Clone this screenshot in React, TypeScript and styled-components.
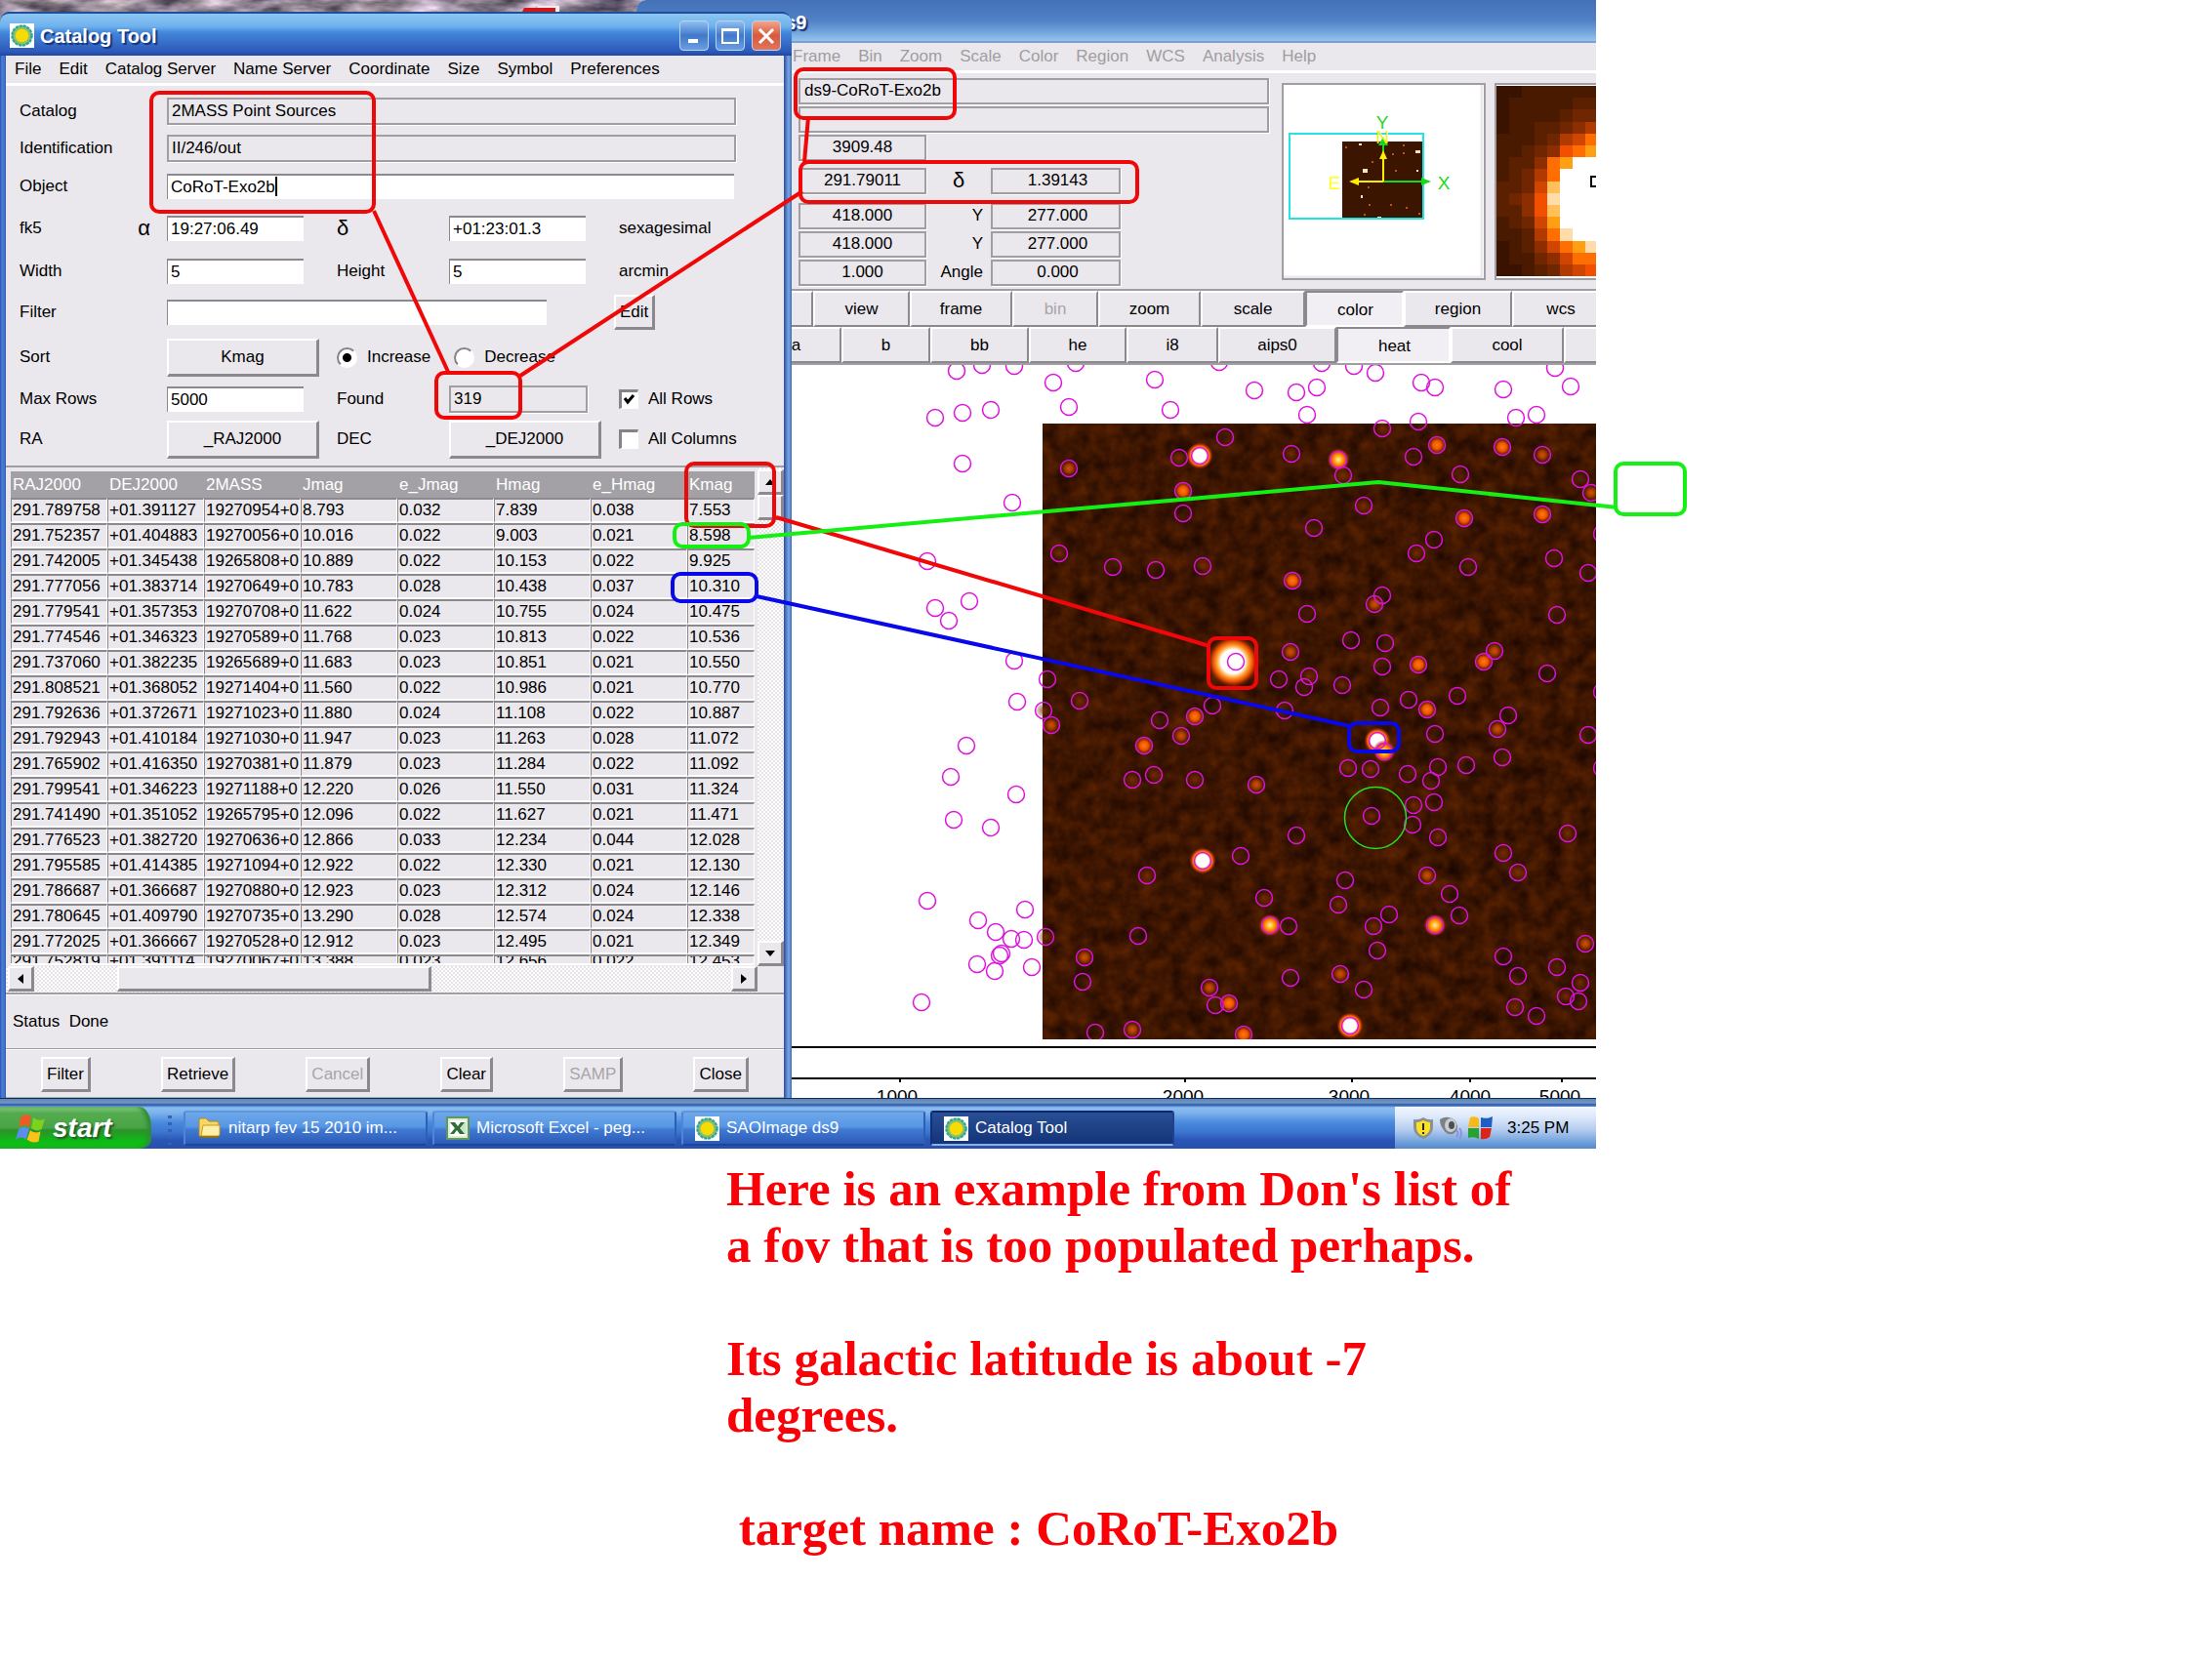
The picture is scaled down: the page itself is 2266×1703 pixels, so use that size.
import React from "react";
import styled, { createGlobalStyle, css } from "styled-components";

const GlobalStyle = createGlobalStyle`
  *, *::before, *::after { box-sizing: border-box; }
  body {
    margin: 0;
    background: #fff;
    color: #000;
    font-family: "Liberation Sans", Arial, sans-serif;
    font-size: 17px;
    line-height: 20px;
  }
  button, input { font: inherit; color: inherit; margin: 0; }
`;

const face = "#ebe8ed";
const edge = "#a09ea3";
const shade = "#8b898e";

const Page = styled.main`
  display: grid;
  grid-template-columns: minmax(0, 1635fr) minmax(0, 631fr);
`;

const Desktop = styled.section`
  position: relative;
  grid-column: 1;
`;

const Wallpaper = styled.svg`
  position: absolute;
  inset: 0;
  width: 100%;
  height: 60px;
`;

/* ---------- Catalog window ---------- */

const CatalogWindow = styled.section`
  position: relative;
  z-index: 2;
  width: 811px;
  margin-top: 12px;
  padding: 0 8px 0 6px;
  background: linear-gradient(90deg, #2a4fa8 0, #4a7fd8 2px, #3f6fcb 5px, transparent 6px),
    linear-gradient(270deg, #3b6ab8 0, #78a9e4 3px, #5a86cc 5px, #2f4aa0 8px);
  border-radius: 10px 10px 0 0;
`;

const DesktopStart = styled.div`
  display: flow-root;
`;

const TitleBar = styled.header`
  display: flex;
  align-items: center;
  gap: 6px;
  height: 45px;
  margin: 0 -8px 0 -6px;
  padding: 2px 11px 0 10px;
  border-top: 2px solid #1f4f9c;
  border-radius: 10px 10px 0 0;
  background: linear-gradient(#8cc6f2 0, #6fb2ec 30%, #4387dc 45%, #3a72cc 65%, #2c5abb 90%, #2244a0 100%);
`;

const TitleText = styled.h1`
  flex: 1;
  margin: 0;
  font-size: 20px;
  line-height: 24px;
  font-weight: 700;
  color: #fff;
  text-shadow: 2px 2px 1px #16337c;
`;

const WindowButtons = styled.div`
  display: flex;
  gap: 7px;
`;

const WindowButton = styled.button<{ $close?: boolean }>`
  display: grid;
  place-items: center;
  width: 30px;
  height: 31px;
  padding: 0;
  border: 1px solid #b9d3f3;
  border-radius: 4px;
  background: ${(p) =>
    p.$close
      ? "linear-gradient(#f0a58c, #d9593a 50%, #e0765c)"
      : "linear-gradient(#8fc0ef, #4278cc 50%, #6b9ee0)"};
`;

const MenuBar = styled.nav<{ $muted?: boolean }>`
  display: flex;
  gap: 18px;
  height: 31px;
  padding: 4px 0 0 ${(p) => (p.$muted ? 160 : 9)}px;
  border-bottom: 3px solid #fff;
  background: ${face};
  color: ${(p) => (p.$muted ? "#9f9da1" : "#000")};
`;

const MenuItem = styled.button`
  padding: 0;
  height: 20px;
  border: 0;
  background: none;
`;

const Form = styled.form`
  display: grid;
  grid-template-columns: 151px 174px 115px 174px 1fr;
  grid-template-rows: 39px 38px 40px 46px 42px 42px 50px 36px 46px;
  align-items: center;
  padding: 6px 0 4px 14px;
  background: ${face};
  border-bottom: 2px solid ${edge};
`;

const FieldLabel = styled.label`
  display: block;
`;

const LabelPair = styled.div`
  display: flex;
  justify-content: space-between;
  padding-right: 17px;
`;

const Greek = styled.label`
  font-size: 22px;
`;

const FieldWrap = styled.div<{ $span: number }>`
  position: relative;
  display: flex;
  grid-column: span ${(p) => p.$span};
`;

const Entry = styled.input<{ $w: number }>`
  width: ${(p) => p.$w}px;
  height: 26px;
  padding: 0 3px;
  border: 0;
  border-top: 2px solid ${shade};
  border-left: 1px solid ${shade};
  border-radius: 0;
  outline: 0;
  background: #fff;
  &:read-only {
    height: 28px;
    border: 2px solid ${edge};
    background: ${face};
    box-shadow: 1px 1px 0 #fff;
  }
`;

const Caret = styled.span`
  position: absolute;
  left: 111px;
  top: 3px;
  width: 2px;
  height: 20px;
  background: #000;
`;

const raised = css`
  border: solid;
  border-width: 2px 3px 3px 2px;
  border-color: #fff ${shade} ${shade} #fff;
  border-radius: 0;
  background: ${face};
`;

const PushButton = styled.button<{ $w?: number; $h?: number }>`
  ${raised}
  width: ${(p) => (p.$w ? `${p.$w}px` : "auto")};
  height: ${(p) => p.$h ?? 36}px;
  padding: 0 4px;
  &:disabled { color: #a7a5a9; }
`;

const EditButton = styled(PushButton)`
  justify-self: start;
  padding: 0 4px;
  margin-left: -5px;
`;

const RadioRow = styled.div`
  grid-column: span 3;
  display: flex;
  gap: 24px;
`;

const Choice = styled.label`
  display: flex;
  align-items: center;
  gap: 10px;
`;

const Radio = styled.input`
  appearance: none;
  width: 21px;
  height: 21px;
  border: 2px solid;
  border-color: #858388 #fff #fff #858388;
  border-radius: 50%;
  background: #fff;
  &:checked { background: radial-gradient(circle, #000 0 4px, #fff 5px); }
`;

const CheckWrap = styled.span`
  display: grid;
  > * { grid-area: 1 / 1; place-self: center; }
  svg { pointer-events: none; }
`;

const Check = styled.input`
  appearance: none;
  width: 20px;
  height: 20px;
  border: 3px solid;
  border-width: 3px 1px 1px 3px;
  border-color: #858388 #fff #fff #858388;
  background: #fff;
`;

const Results = styled.div`
  display: grid;
  grid-template-columns: minmax(0, 1fr) 27px;
  grid-template-rows: 511px 27px;
  border-bottom: 2px solid ${edge};
  background: ${face};
`;

const TableClip = styled.div`
  height: 504px;
  margin: 4px 3px 0 5px;
  overflow: hidden;
  box-shadow: 0 2px 0 #fff;
`;

const Table = styled.table`
  width: 100%;
  table-layout: fixed;
  border-collapse: separate;
  border-spacing: 0;
  col:last-child { width: 69px; }
`;

const HeadCell = styled.th`
  height: 27px;
  padding: 0 2px;
  background: #a3a1a6;
  color: #fff;
  font-weight: 400;
  text-align: left;
`;

const Cell = styled.td<{ $cut: boolean }>`
  height: 26px;
  padding: 0 0 0 1px;
  border: solid;
  border-width: 2px 1px 2px 1px;
  border-color: ${shade} #fff #fff ${shade};
  line-height: ${(p) => (p.$cut ? 10 : 22)}px;
  vertical-align: top;
  white-space: nowrap;
  overflow: hidden;
`;

const trough = css`
  background: repeating-conic-gradient(#fff 0 25%, #e6e3e8 0 50%) 0 0 / 4px 4px;
`;

const VScroll = styled.div`
  ${trough}
  display: flex;
  flex-direction: column;
  padding-top: 2px;
`;

const HScroll = styled.div`
  ${trough}
  display: flex;
  padding-left: 2px;
`;

const ScrollButton = styled.button`
  ${raised}
  display: grid;
  place-items: center;
  flex: none;
  width: 27px;
  height: 26px;
  padding: 0;
`;

const Thumb = styled.div<{ $w?: number; $h?: number }>`
  ${raised}
  width: ${(p) => (p.$w ? `${p.$w}px` : "auto")};
  height: ${(p) => p.$h ?? 26}px;
`;

const Spacer = styled.div<{ $size?: number }>`
  flex: ${(p) => (p.$size ? `0 0 ${p.$size}px` : "1")};
`;

const Status = styled.p`
  margin: 0;
  padding: 17px 7px;
  border-top: 1px solid #fff;
  border-bottom: 1px solid ${edge};
  background: ${face};
`;

const Actions = styled.footer`
  display: flex;
  justify-content: space-around;
  padding: 7px 0 5px;
  border-top: 1px solid #fff;
  border-bottom: 1px solid #a5b0ae;
  background: ${face};
`;

/* ---------- ds9 window ---------- */

const Ds9Window = styled.section`
  position: absolute;
  z-index: 1;
  top: 0;
  right: 0;
  bottom: 52px;
  left: 652px;
  overflow: hidden;
  border-radius: 10px 0 0 0;
  background: ${face};
`;

const Ds9Title = styled.header`
  height: 44px;
  padding: 11px 0 0 140px;
  border-bottom: 2px solid #7e9dd0;
  background: linear-gradient(#4471b8, #5080c6 50%, #6ea0da 75%, #92c4ec);
`;

const Ds9Info = styled.div`
  display: flex;
  padding-left: 166px;
  height: 223px;
  border-bottom: 2px solid ${edge};
`;

const Readouts = styled.div`
  flex: none;
  display: grid;
  grid-template-columns: 131px 66px 133px 152px;
  grid-template-rows: 29px 29px 34px 36px 29px 29px 29px;
  padding-top: 5px;
`;

const Readout = styled.output<{ $long?: boolean }>`
  height: 27px;
  padding: 1px 4px;
  border: 2px solid ${edge};
  box-shadow: 1px 1px 0 #fff;
  text-align: ${(p) => (p.$long ? "left" : "center")};
  ${(p) => p.$long && "grid-column: 1 / -1;"}
`;

const ReadoutLabel = styled.span<{ $end?: boolean }>`
  grid-column: 2;
  padding: ${(p) => (p.$end ? "3px 8px 0 0" : "3px 0 0")};
  text-align: ${(p) => (p.$end ? "right" : "center")};
  font-size: ${(p) => (p.$end ? 17 : 22)}px;
`;

const SecondReadout = styled(Readout)`
  grid-column: 3;
  padding-left: 8px;
`;

const ImageBox = styled.div<{ $w: number }>`
  flex: none;
  width: ${(p) => p.$w}px;
  height: 202px;
  margin: 10px 0 0 ${(p) => (p.$w > 150 ? 13 : 9)}px;
  border: 2px solid ${edge};
  background: #fff;
  svg { display: block; }
`;

const ButtonRow = styled.div<{ $inset: number }>`
  display: flex;
  height: 37px;
  padding-left: ${(p) => p.$inset}px;
`;

const Tab = styled.button<{ $w: number; $on?: boolean }>`
  flex: none;
  width: ${(p) => p.$w}px;
  padding: ${(p) => (p.$on ? "2px 0 0 2px" : "0")};
  border: solid;
  border-width: 2px;
  border-color: ${(p) => (p.$on ? `${shade} #fff #fff ${shade}` : `#fff ${shade} ${shade} #fff`)};
  background: ${(p) => (p.$on ? "#f1eff3" : face)};
  &:disabled { color: #a7a5a9; }
`;

const SkyImage = styled.svg`
  display: block;
  width: 100%;
  height: 753px;
  border-top: 2px solid ${edge};
  background: #fff;
`;

/* ---------- Taskbar ---------- */

const Taskbar = styled.footer`
  position: relative;
  z-index: 2;
  display: flex;
  height: 52px;
  padding-top: 8px;
  border-top: 1px solid #0f2f5c;
  background: linear-gradient(#5b84b6 0, #7497c4 4px, #2a57ab 6px, #8abdf0 9px, #7db3ec 14px, #4a8ade 24px, #3b76d0 34px, #2b55b4 42px, #2750ae 51px);
`;

const StartButton = styled.button`
  flex: none;
  display: flex;
  align-items: center;
  gap: 6px;
  width: 155px;
  padding: 0 0 0 16px;
  border: 0;
  border-radius: 0 12px 12px 0 / 0 22px 10px 0;
  background: linear-gradient(#8fcf8b 0, #55ac50 15%, #48a444 50%, #2d912c 56%, #10b816 80%, #0cc414 100%);
  box-shadow: inset -4px 0 4px #2f8a3a;
  color: #fff;
  font-size: 28px;
  line-height: 32px;
  font-weight: 700;
  font-style: italic;
  text-shadow: 2px 2px 2px #24552a;
`;

const Grip = styled.div`
  flex: none;
  width: 9px;
  margin: 7px 9px 4px 15px;
  background: radial-gradient(circle, #3263b4 0 2px, transparent 2px) 0 0 / 8px 7px;
`;

const Tasks = styled.div`
  flex: 1;
  display: flex;
  gap: 5px;
  padding: 4px 0 3px;
  min-width: 0;
`;

const Task = styled.button<{ $on?: boolean }>`
  flex: none;
  display: flex;
  align-items: center;
  gap: 7px;
  width: 250px;
  padding: 0 0 0 12px;
  border: 2px solid;
  border-color: ${(p) => (p.$on ? "#0d2566 #23408c #8fb0e6 #12307a" : "#5f97dc #2f5fb4 #1c459c #4d86d6")};
  border-radius: 3px;
  background: ${(p) =>
    p.$on
      ? "linear-gradient(#284f95, #1f4185 50%, #12337a)"
      : "linear-gradient(#6ea8ea, #5796e4 45%, #4079d2 55%, #2b5bb8)"};
  color: #fff;
  white-space: nowrap;
`;

const Tray = styled.div`
  flex: none;
  display: flex;
  align-items: center;
  gap: 5px;
  width: 206px;
  padding-left: 18px;
  background: linear-gradient(#f2f7fe 0, #dce8fa 25%, #b4ccef 55%, #6f9fdb 85%, #5488cc 100%);
`;

const Clock = styled.time`
  margin-left: 10px;
`;

const Markup = styled.svg`
  position: absolute;
  z-index: 3;
  top: 0;
  left: 0;
  width: 1635px;
  height: 1177px;
  overflow: visible;
  pointer-events: none;
`;

const Note = styled.p`
  grid-column: 1 / -1;
  margin: 12px 0 0 744px;
  color: #fb0007;
  font: 700 51px/58px "Liberation Serif", "Times New Roman", serif;
  white-space: pre;
`;

/* ---------- Data ---------- */

const columns = ["RAJ2000", "DEJ2000", "2MASS", "Jmag", "e_Jmag", "Hmag", "e_Hmag", "Kmag"];

const rows = `291.789758 +01.391127 19270954+0 8.793 0.032 7.839 0.038 7.553
291.752357 +01.404883 19270056+0 10.016 0.022 9.003 0.021 8.598
291.742005 +01.345438 19265808+0 10.889 0.022 10.153 0.022 9.925
291.777056 +01.383714 19270649+0 10.783 0.028 10.438 0.037 10.310
291.779541 +01.357353 19270708+0 11.622 0.024 10.755 0.024 10.475
291.774546 +01.346323 19270589+0 11.768 0.023 10.813 0.022 10.536
291.737060 +01.382235 19265689+0 11.683 0.023 10.851 0.021 10.550
291.808521 +01.368052 19271404+0 11.560 0.022 10.986 0.021 10.770
291.792636 +01.372671 19271023+0 11.880 0.024 11.108 0.022 10.887
291.792943 +01.410184 19271030+0 11.947 0.023 11.263 0.028 11.072
291.765902 +01.416350 19270381+0 11.879 0.023 11.284 0.022 11.092
291.799541 +01.346223 19271188+0 12.220 0.026 11.550 0.031 11.324
291.741490 +01.351052 19265795+0 12.096 0.022 11.627 0.021 11.471
291.776523 +01.382720 19270636+0 12.866 0.033 12.234 0.044 12.028
291.795585 +01.414385 19271094+0 12.922 0.022 12.330 0.021 12.130
291.786687 +01.366687 19270880+0 12.923 0.023 12.312 0.024 12.146
291.780645 +01.409790 19270735+0 13.290 0.028 12.574 0.024 12.338
291.772025 +01.366667 19270528+0 12.912 0.023 12.495 0.021 12.349
291.752819 +01.391114 19270067+0 13.388 0.023 12.656 0.022 12.453`
  .split("\n")
  .map((line) => line.split(" "));

// Catalogue sources: x, y and brightness class (0 none, 1 dim, 2 medium, 3 bright, 4 hot, 5 saturated)
const sources: number[][] = [
  [980,380,0],[1006,374,0],[1039,375,0],[1102,372,0],[1079,392,0],[1183,389,0],[1095,417,0],[1199,420,0],[958,428,0],[986,423,0],
  [1015,420,0],[986,475,0],[1037,515,0],[1095,480,2],[1208,469,1],[1229,467,5],[1212,503,3],[1212,526,0],[1085,567,1],[1140,581,0],
  [1184,584,0],[1232,580,1],[950,575,0],[993,616,0],[958,623,0],[972,636,0],[1039,677,0],[1073,696,0],[1042,719,0],[1069,728,1],
  [1077,743,2],[1106,718,1],[1188,738,0],[1224,734,3],[1242,723,0],[1210,754,2],[1172,764,3],[990,764,0],
  [1249,371,0],[1285,400,0],[1328,402,0],[1349,397,0],[1354,372,0],[1339,425,0],[1387,375,0],[1409,382,0],[1456,392,0],[1470,397,0],
  [1540,399,0],[1593,377,0],[1609,396,0],[1553,428,0],[1574,425,0],[1453,432,0],[1416,439,1],[1255,448,0],[1323,465,1],[1371,471,4],
  [1376,487,1],[1448,468,0],[1472,456,3],[1539,458,3],[1580,466,2],[1496,486,0],[1619,491,0],[1630,505,2],[1397,518,1],[1346,541,0],
  [1500,531,3],[1580,527,3],[1469,553,0],[1451,567,1],[1504,581,0],[1592,572,0],[1627,587,0],[1641,547,0],[1324,595,3],[1416,610,0],
  [1408,619,2],[1339,629,0],[1384,656,0],[1419,659,0],[1595,630,0],[1322,668,2],[1416,683,0],[1453,681,3],[1531,667,2],[1520,678,3],
  [1585,690,0],[1310,696,0],[1341,693,1],[1336,704,0],[1375,702,1],[1641,709,0],[1493,713,0],[1316,728,0],[1414,725,0],[1443,717,0],
  [1462,727,3],[1545,733,0],[1534,747,2],[1470,752,0],[1627,753,0],[1266,678,6],[1411,759,5],[1418,770,4],
  [974,796,0],[1041,814,0],[977,840,0],[1015,848,0],[950,923,0],[1002,943,0],[1050,932,0],[1020,955,0],[1036,962,0],[1049,963,0],
  [1024,979,0],[1026,977,0],[1001,988,0],[1019,995,0],[1057,991,0],[944,1027,0],[1071,960,1],[1160,799,1],[1182,794,1],[1224,799,1],
  [1232,882,5],[1175,897,1],[1166,959,0],[1111,981,2],[1109,1006,0],[1239,1012,2],[1245,1030,0],[1122,1058,0],[1160,1055,2],
  [1381,787,1],[1404,788,1],[1442,793,0],[1473,786,0],[1466,800,0],[1502,784,0],[1539,776,0],[1287,804,2],[1405,836,1],[1448,825,1],
  [1447,845,0],[1469,822,0],[1473,858,1],[1328,856,0],[1271,877,0],[1606,854,1],[1540,874,1],[1555,894,1],[1462,897,2],[1378,902,0],
  [1371,927,1],[1485,916,0],[1495,938,0],[1295,920,1],[1301,948,4],[1320,949,0],[1470,948,4],[1423,937,0],[1407,949,1],[1411,974,0],
  [1540,980,0],[1555,1000,0],[1624,967,2],[1595,991,0],[1619,1007,1],[1604,1021,1],[1617,1026,0],[1322,1002,0],[1373,998,2],
  [1397,1014,0],[1259,1028,3],[1274,1060,3],[1383,1051,5],[1552,1032,1],[1574,1041,0],[1641,787,0],
];

const glow = ["", "dim", "mid", "hot", "gold", "white"];
const glowRadius = [0, 9, 9, 10, 12, 14];

const magnifierColors = ["#3a1200", "#4a1a00", "#5a2000", "#702600", "#8c2e00", "#b03a00", "#d04600", "#f25000", "#ff6e00", "#ff9f12", "#ffc05a", "#ffdcaa", "#ffffff"];
const magnifierRows = [
  "00111111", "01111122", "01111233", "01122345", "11123568", "11234789", "122489cc", "12358ccc",
  "2236accc", "2347bccc", "2247accc", "12369ccc", "11258bcc", "0124689b", "01134688", "00123567",
];

/* ---------- Drawings ---------- */

const SunIcon = () => (
  <svg width="25" height="25" viewBox="0 0 25 25" aria-hidden="true">
    <rect width="25" height="25" fill="#fff" />
    <circle cx="12.5" cy="12.5" r="10.5" fill="#8fc069" />
    <circle cx="12.5" cy="12.5" r="10" fill="none" stroke="#2fa7a0" strokeWidth="2.5" strokeDasharray="3 1" />
    <circle cx="12.5" cy="12.5" r="6.8" fill="#f7dc04" />
  </svg>
);

const FolderIcon = () => (
  <svg width="25" height="24" viewBox="0 0 25 24" aria-hidden="true">
    <path d="M2 4q0-2 2-2h5l3 3h8q2 0 2 2v13H2z" fill="#f6d768" stroke="#b98a17" />
    <path d="M6 9h17v9q0 2-2 2H4z" fill="#fff0a8" stroke="#c79a24" />
    <path d="M3 20h19l-1 2H4z" fill="#9a7010" />
  </svg>
);

const ExcelIcon = () => (
  <svg width="24" height="24" viewBox="0 0 24 24" aria-hidden="true">
    <rect x="1" y="1" width="22" height="22" fill="#dcebd6" stroke="#5d9a5c" strokeWidth="2" />
    <rect x="4" y="4" width="16" height="16" fill="#fff" />
    <rect x="14" y="6" width="6" height="12" fill="#cfe3ca" />
    <path d="M4 6h5l3 4 3-4h4l-5 6 5 6h-5l-3-4-3 4H4l5-6z" fill="#2d6f34" />
  </svg>
);

const FlagIcon = () => (
  <svg width="32" height="30" viewBox="0 0 30 28" aria-hidden="true">
    <path d="M5 3q5-4 10 0l-2 10q-5-4-10 0z" fill="#ee5a24" />
    <path d="M17 4q5 4 11 1l-3 10q-5 3-10-1z" fill="#7dd21e" />
    <path d="M3 15q5-4 10 0l-3 10q-4-4-10 0z" fill="#5b8def" />
    <path d="M14 16q5 4 10 1l-2 10q-6 2-11-2z" fill="#fbc21a" />
  </svg>
);

const Arrow = ({ d }: { d: string }) => (
  <svg width="12" height="12" viewBox="0 0 12 12" aria-hidden="true"><path d={d} fill="#000" /></svg>
);

const Sky = () => (
  <SkyImage viewBox="652 374 983 751" preserveAspectRatio="xMinYMin slice" role="img" aria-label="Star field">
    <defs>
      <filter id="grain" x="0" y="0" width="1" height="1" colorInterpolationFilters="sRGB">
        <feTurbulence type="fractalNoise" baseFrequency="0.06" numOctaves="3" seed="8" />
        <feColorMatrix values="0.32 0 0 0 0.08  0.14 0 0 0 0.015  0 0 0 0 0.004  0 0 0 0 1" />
      </filter>
      <radialGradient id="dim"><stop offset="0" stopColor="#8a3000" stopOpacity=".8" /><stop offset="1" stopColor="#6b2400" stopOpacity="0" /></radialGradient>
      <radialGradient id="mid"><stop offset="0" stopColor="#d25000" /><stop offset=".4" stopColor="#a83c00" /><stop offset="1" stopColor="#6b2400" stopOpacity="0" /></radialGradient>
      <radialGradient id="hot"><stop offset="0" stopColor="#ff7c0a" /><stop offset=".45" stopColor="#ee5200" /><stop offset="1" stopColor="#7a2400" stopOpacity="0" /></radialGradient>
      <radialGradient id="gold"><stop offset="0" stopColor="#fff0a0" /><stop offset=".35" stopColor="#ffa412" /><stop offset=".65" stopColor="#e84e00" /><stop offset="1" stopColor="#7a2400" stopOpacity="0" /></radialGradient>
      <radialGradient id="white"><stop offset=".45" stopColor="#fff" /><stop offset=".62" stopColor="#ff9d2a" /><stop offset=".78" stopColor="#e04400" /><stop offset="1" stopColor="#5a1c00" stopOpacity="0" /></radialGradient>
    </defs>
    <rect x="1068" y="434" width="567" height="631" fill="#3c1500" filter="url(#grain)" />
    <circle cx="1263" cy="678" r="27" fill="url(#white)" />
    {sources.filter((s) => s[2] > 0 && s[2] < 6).map(([x, y, b]) => (
      <circle key={`${x}-${y}`} cx={x} cy={y} r={glowRadius[b]} fill={`url(#${glow[b]})`} />
    ))}
    <g fill="none" stroke="#dd12dd" strokeWidth="1.5">
      {sources.map(([x, y]) => <circle key={`${x}-${y}`} cx={x} cy={y} r="8.5" />)}
    </g>
    <circle cx="1409" cy="838" r="31.5" fill="none" stroke="#22e022" strokeWidth="1.5" />
    <rect x="652" y="1065" width="983" height="60" fill="#fff" />
    <path d="M652 1073H1635M652 1105H1635M922 1105v4M1214 1105v4M1385 1105v4M1506 1105v4M1600 1105v4" stroke="#000" strokeWidth="2" />
    <g fontSize="19" textAnchor="middle">
      <text x="919" y="1130">1000</text>
      <text x="1212" y="1130">2000</text>
      <text x="1382" y="1130">3000</text>
      <text x="1506" y="1130">4000</text>
      <text x="1598" y="1130">5000</text>
    </g>
  </SkyImage>
);

const Panner = () => (
  <svg width="204" height="198" viewBox="1315 86 204 198" role="img" aria-label="Panner">
    <path d="M1518 86v198M1315 283h204" stroke={face} strokeWidth="3" />
    <rect x="1375" y="144" width="84" height="80" fill="#3b1500" />
    <g fill="#ffe2b8">
      <rect x="1396" y="172" width="5" height="4" /><rect x="1450" y="153" width="5" height="3" /><rect x="1392" y="146" width="3" height="2" />
      <rect x="1394" y="199" width="2" height="3" /><rect x="1451" y="173" width="2" height="2" /><rect x="1411" y="221" width="4" height="2" />
    </g>
    <g fill="#b85414">
      <rect x="1405" y="164" width="2" height="2" /><rect x="1429" y="173" width="2" height="2" /><rect x="1424" y="208" width="2" height="2" />
      <rect x="1401" y="190" width="2" height="2" /><rect x="1437" y="147" width="2" height="2" /><rect x="1437" y="155" width="2" height="2" />
      <rect x="1397" y="218" width="2" height="2" /><rect x="1453" y="217" width="2" height="2" /><rect x="1402" y="208" width="2" height="2" />
      <rect x="1378" y="149" width="2" height="2" /><rect x="1440" y="211" width="2" height="2" /><rect x="1426" y="156" width="2" height="2" />
    </g>
    <rect x="1321" y="136" width="137" height="87" fill="none" stroke="#22e4e4" strokeWidth="2" />
    <path d="M1417 185V142M1417 185H1464" stroke="#18d818" strokeWidth="2" />
    <path d="M1412 148l5-9 5 9zM1456 181l10 4-10 4z" fill="#18d818" />
    <path d="M1417 185V156M1417 185H1384" stroke="#ffee00" strokeWidth="2" />
    <path d="M1413 162l4-9 4 9zM1392 181l-10 4 10 4z" fill="#ffee00" />
    <g fontSize="19" textAnchor="middle">
      <text x="1416" y="131" fill="#22d822">Y</text>
      <text x="1416" y="146" fill="#f6ee1c">N</text>
      <text x="1367" y="193" fill="#ffff1c">E</text>
      <text x="1479" y="193" fill="#22d822">X</text>
    </g>
  </svg>
);

const Magnifier = () => (
  <svg width="104" height="198" viewBox="1533 86 104 198" shapeRendering="crispEdges" role="img" aria-label="Magnifier">
    {magnifierRows.map((line, r) =>
      [...line].map((c, i) => (
        <rect key={`${r}-${i}`} x={1533 + i * 13} y={87 + r * 12.2} width="13" height="12.4" fill={magnifierColors[parseInt(c, 16)]} />
      )),
    )}
    <path d="M1637 180h-7v10h7" fill="none" stroke="#000" strokeWidth="2" />
  </svg>
);

const Annotations = () => (
  <Markup viewBox="0 0 1635 1177" fill="none" strokeWidth="4" aria-hidden="true">
    <g stroke="#f00808">
      <rect x="155" y="95" width="228" height="122" rx="8" />
      <path d="M383 216L460 383" />
      <rect x="447" y="382" width="86" height="46" rx="8" />
      <path d="M533 385L822 196" />
      <rect x="815" y="71" width="163" height="50" rx="8" />
      <path d="M828 120L824 166" />
      <rect x="820" y="166" width="345" height="41" rx="8" />
      <rect x="703" y="475" width="90" height="64" rx="8" />
      <path d="M795 530L1239 662" />
      <rect x="1238" y="654" width="49" height="51" rx="8" />
    </g>
    <g stroke="#14f014">
      <rect x="691" y="537" width="76" height="23" rx="8" />
      <path d="M767 551L1412 494L1657 520" />
      <rect x="1655" y="475" width="71" height="52" rx="8" />
    </g>
    <g stroke="#0808e8">
      <rect x="689" y="588" width="86" height="28" rx="8" />
      <path d="M775 611L1383 744" />
      <rect x="1382" y="741" width="51" height="29" rx="8" />
    </g>
  </Markup>
);

/* ---------- Windows ---------- */

const CheckBox = ({ label, on }: { label: string; on?: boolean }) => (
  <Choice>
    <CheckWrap>
      <Check type="checkbox" defaultChecked={on} />
      {on && (
        <svg width="20" height="20" viewBox="0 0 20 20" aria-hidden="true">
          <path d="M6 9l3 4 6-7" fill="none" stroke="#000" strokeWidth="3" />
        </svg>
      )}
    </CheckWrap>
    {label}
  </Choice>
);

const Catalog = () => (
  <CatalogWindow>
    <TitleBar>
      <SunIcon />
      <TitleText>Catalog Tool</TitleText>
      <WindowButtons>
        <WindowButton aria-label="Minimize">
          <svg width="20" height="20" viewBox="0 0 20 20"><path d="M4 15h10" stroke="#fff" strokeWidth="4" /></svg>
        </WindowButton>
        <WindowButton aria-label="Maximize">
          <svg width="20" height="20" viewBox="0 0 20 20"><path d="M2 3h16v14H2zM2 4h16" fill="none" stroke="#fff" strokeWidth="2" /></svg>
        </WindowButton>
        <WindowButton $close aria-label="Close window">
          <svg width="20" height="20" viewBox="0 0 20 20"><path d="M3 3l14 14M17 3L3 17" stroke="#fff" strokeWidth="3" /></svg>
        </WindowButton>
      </WindowButtons>
    </TitleBar>
    <MenuBar>
      {["File", "Edit", "Catalog Server", "Name Server", "Coordinate", "Size", "Symbol", "Preferences"].map((m) => (
        <MenuItem key={m}>{m}</MenuItem>
      ))}
    </MenuBar>
    <Form onSubmit={(e) => e.preventDefault()}>
      <FieldLabel htmlFor="catalog">Catalog</FieldLabel>
      <FieldWrap $span={4}><Entry id="catalog" $w={583} readOnly defaultValue="2MASS Point Sources" /></FieldWrap>
      <FieldLabel htmlFor="ident">Identification</FieldLabel>
      <FieldWrap $span={4}><Entry id="ident" $w={583} readOnly defaultValue="II/246/out" /></FieldWrap>
      <FieldLabel htmlFor="object">Object</FieldLabel>
      <FieldWrap $span={4}><Entry id="object" $w={581} defaultValue="CoRoT-Exo2b" /><Caret /></FieldWrap>

      <LabelPair><span>fk5</span><Greek htmlFor="alpha">α</Greek></LabelPair>
      <Entry id="alpha" $w={140} defaultValue="19:27:06.49" />
      <Greek htmlFor="delta">δ</Greek>
      <Entry id="delta" $w={140} defaultValue="+01:23:01.3" />
      <span>sexagesimal</span>

      <FieldLabel htmlFor="width">Width</FieldLabel>
      <Entry id="width" $w={140} defaultValue="5" />
      <FieldLabel htmlFor="height">Height</FieldLabel>
      <Entry id="height" $w={140} defaultValue="5" />
      <span>arcmin</span>

      <FieldLabel htmlFor="filter">Filter</FieldLabel>
      <FieldWrap $span={3}><Entry id="filter" $w={389} /></FieldWrap>
      <EditButton type="button">Edit</EditButton>

      <span>Sort</span>
      <PushButton type="button" $w={156} $h={39}>Kmag</PushButton>
      <RadioRow>
        <Choice><Radio type="radio" name="order" defaultChecked />Increase</Choice>
        <Choice><Radio type="radio" name="order" />Decrease</Choice>
      </RadioRow>

      <FieldLabel htmlFor="max">Max Rows</FieldLabel>
      <Entry id="max" $w={140} defaultValue="5000" />
      <FieldLabel htmlFor="found">Found</FieldLabel>
      <Entry id="found" $w={142} readOnly defaultValue="319" />
      <CheckBox label="All Rows" on />

      <span>RA</span>
      <PushButton type="button" $w={156} $h={39}>_RAJ2000</PushButton>
      <span>DEC</span>
      <PushButton type="button" $w={156} $h={39}>_DEJ2000</PushButton>
      <CheckBox label="All Columns" />
    </Form>
    <Results>
      <TableClip>
        <Table>
          <colgroup>{columns.map((c) => <col key={c} />)}</colgroup>
          <thead>
            <tr>{columns.map((c) => <HeadCell key={c} scope="col">{c}</HeadCell>)}</tr>
          </thead>
          <tbody>
            {rows.map((row, r) => (
              <tr key={row[0]}>
                {row.map((v, i) => <Cell key={i} $cut={r === rows.length - 1}>{v}</Cell>)}
              </tr>
            ))}
          </tbody>
        </Table>
      </TableClip>
      <VScroll>
        <ScrollButton aria-label="Scroll up"><Arrow d="M1 9h10L6 3z" /></ScrollButton>
        <Thumb $h={26} />
        <Spacer />
        <ScrollButton aria-label="Scroll down"><Arrow d="M1 3h10L6 9z" /></ScrollButton>
      </VScroll>
      <HScroll>
        <ScrollButton aria-label="Scroll left"><Arrow d="M9 1v10L3 6z" /></ScrollButton>
        <Spacer $size={85} />
        <Thumb $w={322} />
        <Spacer />
        <ScrollButton aria-label="Scroll right"><Arrow d="M3 1v10l6-5z" /></ScrollButton>
      </HScroll>
    </Results>
    <Status>Status&nbsp; Done</Status>
    <Actions>
      <PushButton>Filter</PushButton>
      <PushButton>Retrieve</PushButton>
      <PushButton disabled>Cancel</PushButton>
      <PushButton>Clear</PushButton>
      <PushButton disabled>SAMP</PushButton>
      <PushButton>Close</PushButton>
    </Actions>
  </CatalogWindow>
);

const Ds9 = () => (
  <Ds9Window>
    <Ds9Title><TitleText as="h2">ds9</TitleText></Ds9Title>
    <MenuBar $muted>
      {["Frame", "Bin", "Zoom", "Scale", "Color", "Region", "WCS", "Analysis", "Help"].map((m) => (
        <MenuItem key={m}>{m}</MenuItem>
      ))}
    </MenuBar>
    <Ds9Info>
      <Readouts>
        <Readout $long>ds9-CoRoT-Exo2b</Readout>
        <Readout $long />
        <Readout>3909.48</Readout><span /><span /><span />
        <Readout>291.79011</Readout><ReadoutLabel>δ</ReadoutLabel><SecondReadout>1.39143</SecondReadout><span />
        <Readout>418.000</Readout><ReadoutLabel $end>Y</ReadoutLabel><SecondReadout>277.000</SecondReadout><span />
        <Readout>418.000</Readout><ReadoutLabel $end>Y</ReadoutLabel><SecondReadout>277.000</SecondReadout><span />
        <Readout>1.000</Readout><ReadoutLabel $end>Angle</ReadoutLabel><SecondReadout>0.000</SecondReadout><span />
      </Readouts>
      <ImageBox $w={209}><Panner /></ImageBox>
      <ImageBox $w={110}><Magnifier /></ImageBox>
    </Ds9Info>
    <ButtonRow $inset={82}>
      <Tab $w={99} aria-label="edit" />
      <Tab $w={99}>view</Tab>
      <Tab $w={105}>frame</Tab>
      <Tab $w={88} disabled>bin</Tab>
      <Tab $w={105}>zoom</Tab>
      <Tab $w={107}>scale</Tab>
      <Tab $w={101} $on>color</Tab>
      <Tab $w={111}>region</Tab>
      <Tab $w={100}>wcs</Tab>
    </ButtonRow>
    <ButtonRow $inset={117}>
      <Tab $w={93}>a</Tab>
      <Tab $w={91}>b</Tab>
      <Tab $w={101}>bb</Tab>
      <Tab $w={100}>he</Tab>
      <Tab $w={94}>i8</Tab>
      <Tab $w={121}>aips0</Tab>
      <Tab $w={117} $on>heat</Tab>
      <Tab $w={116}>cool</Tab>
      <Tab $w={100} aria-label="rainbow" />
    </ButtonRow>
    <Sky />
  </Ds9Window>
);

const App = () => (
  <>
    <GlobalStyle />
    <Page>
      <Desktop>
        <Wallpaper aria-hidden="true">
          <defs>
            <filter id="rock" x="0" y="0" width="1" height="1" colorInterpolationFilters="sRGB">
              <feTurbulence type="fractalNoise" baseFrequency="0.02 0.06" numOctaves="4" seed="3" />
              <feColorMatrix values="1.2 0 0 0 -0.02  1.1 0 0 0 -0.02  1.1 0.1 0 0 -0.01  0 0 0 0 1" />
            </filter>
          </defs>
          <rect width="100%" height="60" filter="url(#rock)" />
          <path d="M551 6h22v6h-22z" fill="#f2eeee" />
          <path d="M537 8h32v4h-34z" fill="#d01818" />
        </Wallpaper>
        <DesktopStart><Catalog /></DesktopStart>
        <Ds9 />
        <Taskbar>
          <StartButton><FlagIcon />start</StartButton>
          <Grip />
          <Tasks>
            <Task><FolderIcon />nitarp fev 15 2010 im...</Task>
            <Task><ExcelIcon />Microsoft Excel - peg...</Task>
            <Task><SunIcon />SAOImage ds9</Task>
            <Task $on><SunIcon />Catalog Tool</Task>
          </Tasks>
          <Tray>
            <svg width="22" height="24" viewBox="0 0 22 24" aria-hidden="true">
              <path d="M11 1q5 3 10 2v8q0 8-10 12Q1 19 1 11V3q5 1 10-2z" fill="#8b8f96" />
              <path d="M11 4q4 2 7 2v6q0 5-7 8-7-3-7-8V6q3 0 7-2z" fill="#fbe11e" />
              <path d="M11 7v7M11 16v2" stroke="#222" strokeWidth="2" />
            </svg>
            <svg width="24" height="24" viewBox="0 0 24 24" aria-hidden="true">
              <path d="M1 3q5-3 9-2 8 1 9 9 0 6-5 8-6 1-9-4-4-5-4-11z" fill="#7d8085" />
              <ellipse cx="12" cy="9" rx="6" ry="7" fill="#c9ccd1" />
              <ellipse cx="13" cy="9" rx="3" ry="4" fill="#4b4e54" />
              <path d="M18 14q3 3 0 7M21 12q4 5 0 11" fill="none" stroke="#8c93da" strokeWidth="2" />
            </svg>
            <svg width="26" height="25" viewBox="0 0 26 25" aria-hidden="true">
              <path d="M3 2q5-2 9 1v9H1z" fill="#f6b918" />
              <path d="M14 2q6 2 12-1l-1 11H14z" fill="#1f5fc4" />
              <path d="M1 13h11v11q-5-3-11-1z" fill="#28a032" />
              <path d="M14 13h11l-2 9q-4 3-9 2z" fill="#dc2418" />
            </svg>
            <Clock>3:25 PM</Clock>
          </Tray>
        </Taskbar>
        <Annotations />
      </Desktop>
      <Note>{"Here is an example from Don's list of\na fov that is too populated perhaps.\n\nIts galactic latitude is about -7\ndegrees.\n\n target name : CoRoT-Exo2b"}</Note>
    </Page>
  </>
);

export default App;
